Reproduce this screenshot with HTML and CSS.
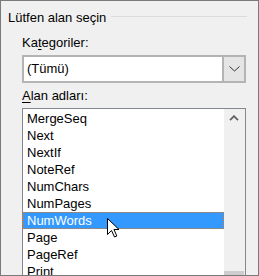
FILE: index.html
```html
<!DOCTYPE html>
<html lang="tr">

<head>
    <meta charset="UTF-8">
    <meta name="viewport" content="width=device-width, initial-scale=1.0">
    <title>Alan</title>
    <link rel="stylesheet" href="styles.css">
</head>

<body>
    <div class="dialog">
        <div class="group-title">
            <span>Lütfen alan seçin</span>
            <div class="rule"></div>
        </div>

        <div class="fields">
            <div class="label">Ka<u>t</u>egoriler:</div>
            <div class="combo">
                <div class="combo-value">(Tümü)</div>
                <div class="combo-btn">
                    <svg width="11" height="6" viewBox="0 0 11 6">
                        <path d="M0.5 0.5 L5.5 5 L10.5 0.5" fill="none" stroke="#333" stroke-width="1" />
                    </svg>
                </div>
            </div>

            <div class="label"><u>A</u>lan adları:</div>
            <div class="listbox">
                <ul class="items">
                    <li>MergeSeq</li>
                    <li>Next</li>
                    <li>NextIf</li>
                    <li>NoteRef</li>
                    <li>NumChars</li>
                    <li>NumPages</li>
                    <li class="selected">NumWords</li>
                    <li>Page</li>
                    <li>PageRef</li>
                    <li>Print</li>
                </ul>
                <div class="scrollbar">
                    <div class="scroll-up">
                        <svg width="10" height="6" viewBox="0 0 10 6">
                            <path d="M1 5.2 L5 1.2 L9 5.2" fill="none" stroke="#606060" stroke-width="1.8" />
                        </svg>
                    </div>
                    <div class="track"></div>
                    <div class="thumb"></div>
                </div>

                <!-- mouse pointer over the selected row -->
                <svg class="cursor" width="13" height="20" viewBox="0 0 13 20">
                    <path d="M0.5 0.5 L0.5 16.5 L4.5 12.5 L7.5 19 L9.8 18 L7 11.5 L12 11.5 Z" fill="#fff" stroke="#000" stroke-width="1" stroke-linejoin="miter" />
                </svg>
            </div>
        </div>
    </div>
</body>

</html>
```

FILE: styles.css
```css
body {
    margin: 0;
    padding: 0;
    font-family: "Liberation Sans", Arial, sans-serif;
    font-size: 13px;
    line-height: 17px;
    color: #000;
}

.dialog {
    box-sizing: border-box;
    width: 259px;
    height: 276px;
    border: 1px solid #7a7a7a;
    background: #f0f0f0;
    overflow: hidden;
    padding-top: 8px;
}

.group-title {
    display: flex;
    padding-left: 7px;
}

.rule {
    flex: 1;
    height: 1px;
    margin: 7px 11px 0 5px;
    background: #dcdcdc;
}

.fields {
    padding-left: 21px;
    margin-top: 8px;
}

.label {
    margin-bottom: 4px;
}

.label u {
    text-decoration-thickness: 1px;
    text-underline-offset: 2px;
}

.combo {
    box-sizing: border-box;
    display: flex;
    width: 224px;
    height: 28px;
    margin-bottom: 4px;
    border: 2px solid #b4b4b4;
    background: #fff;
}

.combo-value {
    flex: 1;
    padding-left: 3px;
    padding-top: 3px;
}

.combo-btn {
    width: 20px;
    border-left: 2px solid #b4b4b4;
    background: #e5e5e5;
    display: flex;
    align-items: center;
    justify-content: center;
}

.listbox {
    position: relative;
    box-sizing: border-box;
    display: flex;
    width: 224px;
    height: 200px;
    border: 1px solid #828790;
    background: #fff;
}

.items {
    list-style: none;
    margin: 1px 0 0;
    padding: 0;
    width: 201px;
}

.items li {
    box-sizing: border-box;
    height: 17px;
    padding-left: 4px;
    white-space: nowrap;
}

.items li.selected {
    background: #3399ff;
    color: #fff;
    border: 1px dotted #e0781e;
    padding-left: 3px;
    line-height: 15px;
}

.scrollbar {
    width: 21px;
    background: #f0f0f0;
    display: flex;
    flex-direction: column;
}

.scroll-up {
    height: 17px;
    display: flex;
    align-items: center;
    justify-content: center;
    padding-right: 1px;
}

.track {
    height: 145px;
}

.thumb {
    height: 30px;
    margin-right: 1px;
    background: #cdcdcd;
}

.cursor {
    position: absolute;
    left: 84px;
    top: 109px;
}
```
